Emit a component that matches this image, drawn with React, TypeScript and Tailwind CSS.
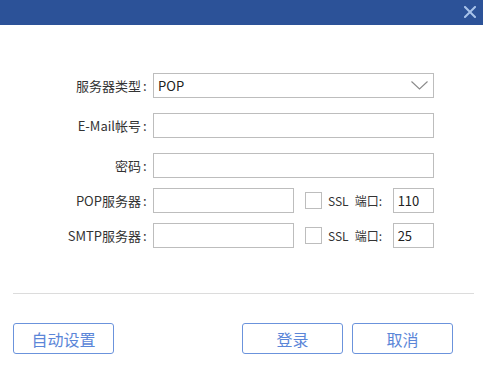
import React from 'react'

const font = { fontFamily: '"Noto Sans CJK SC", "Noto Sans", sans-serif' }

function Label({ text }: { text: string }) {
  return (
    <div className="w-[149px] shrink-0 flex justify-end text-[13px] text-[#333] leading-none">
      <span>{text}</span>
      <span className="w-[8px] pl-[2px]">:</span>
    </div>
  )
}

function Field({ width, value }: { width: string; value?: string }) {
  return (
    <div
      className={`${width} h-[25px] shrink-0 border border-[#bdbdbd] bg-white flex items-center pl-[4px] text-[13px] text-[#222] leading-none`}
    >
      {value}
    </div>
  )
}

function ServerRow({ label, port }: { label: string; port: string }) {
  return (
    <div className="flex items-center h-[25px]">
      <Label text={label} />
      <div className="ml-[4px]">
        <Field width="w-[141px]" />
      </div>
      <div className="ml-[11px] w-[17px] h-[17px] border border-[#bdbdbd] bg-white shrink-0" />
      <span className="ml-[6px] text-[12px] text-[#333] leading-none">SSL</span>
      <span className="ml-[6px] text-[12px] text-[#333] leading-none w-[38px]">端口:</span>
      <Field width="w-[41px]" value={port} />
    </div>
  )
}

function Button({ children, className }: { children: React.ReactNode; className?: string }) {
  return (
    <button
      className={`h-[31px] w-[101px] rounded-[3px] border border-[#6b93dc] bg-white text-[16px] text-[#5b86d8] leading-none ${className ?? ''}`}
    >
      {children}
    </button>
  )
}

export default function App() {
  return (
    <div className="w-[483px] h-[367px] bg-white overflow-hidden" style={font}>
      {/* title bar */}
      <div className="h-[25px] bg-[#2c5298] flex items-center justify-end pr-[7px]">
        <svg width="12" height="12" viewBox="0 0 12 12" className="mb-[1px]">
          <path d="M1 1 L11 11 M11 1 L1 11" stroke="#a8c3ea" strokeWidth="2" strokeLinecap="square" />
        </svg>
      </div>

      {/* form */}
      <div className="mt-[48px] flex flex-col">
        <div className="flex items-center h-[25px]">
          <Label text="服务器类型" />
          <div className="ml-[4px] w-[281px] h-[25px] border border-[#bdbdbd] flex items-center justify-between pl-[4px] pr-[5px] text-[13px] text-[#222] leading-none">
            <span>POP</span>
            <svg width="17" height="9" viewBox="0 0 17 9">
              <path d="M0.5 0.5 L8.5 8 L16.5 0.5" fill="none" stroke="#8a8a8a" strokeWidth="1.1" />
            </svg>
          </div>
        </div>

        <div className="flex items-center h-[25px] mt-[15px]">
          <Label text="E-Mail帐号" />
          <div className="ml-[4px]">
            <Field width="w-[281px]" />
          </div>
        </div>

        <div className="flex items-center h-[25px] mt-[15px]">
          <Label text="密码" />
          <div className="ml-[4px]">
            <Field width="w-[281px]" />
          </div>
        </div>

        <div className="mt-[10px]">
          <ServerRow label="POP服务器" port="110" />
        </div>
        <div className="mt-[10px]">
          <ServerRow label="SMTP服务器" port="25" />
        </div>
      </div>

      {/* divider */}
      <div className="ml-[13px] mr-[9px] mt-[45px] h-px bg-[#dcdcdc]" />

      {/* buttons */}
      <div className="mt-[29px] px-[13px] flex items-center">
        <Button>自动设置</Button>
        <Button className="ml-auto">登录</Button>
        <Button className="ml-[9px] mr-[17px]">取消</Button>
      </div>
    </div>
  )
}
